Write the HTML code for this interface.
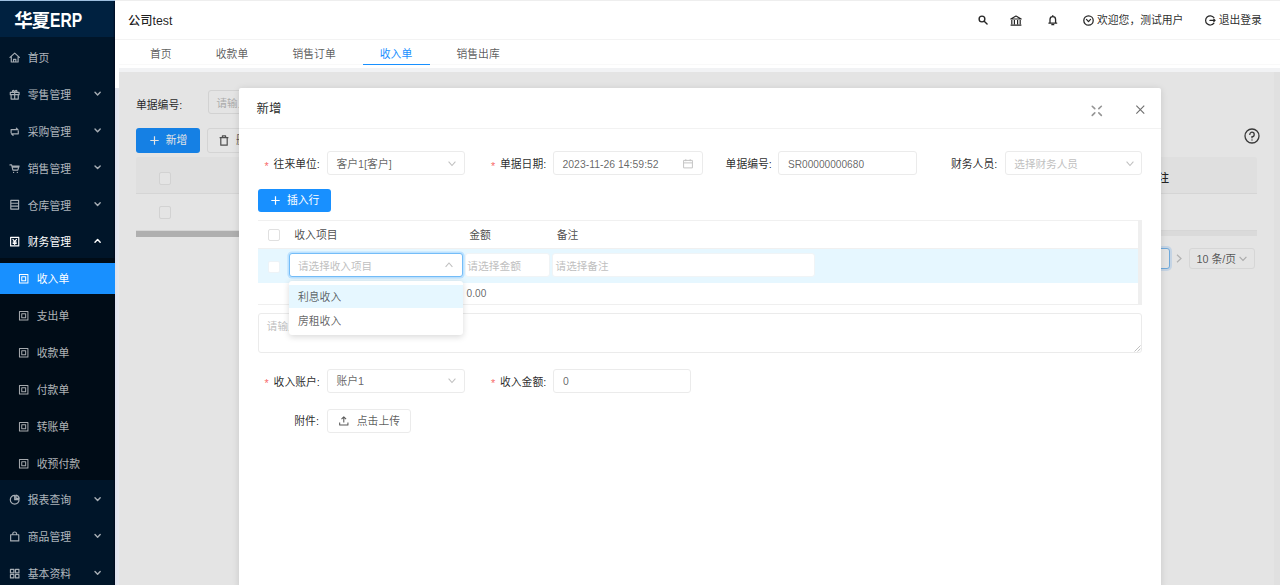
<!DOCTYPE html>
<html lang="zh-CN">
<head>
<meta charset="utf-8">
<title>华夏ERP</title>
<style>
*{box-sizing:border-box;margin:0;padding:0}
html,body{width:1280px;height:585px;overflow:hidden;background:#fff}
body{position:relative;font-family:"Liberation Sans","Noto Sans CJK SC",sans-serif;font-size:10.8px;color:rgba(0,0,0,.65);line-height:1}
.a{position:absolute;white-space:nowrap}
svg{position:absolute;display:block;overflow:visible}
/* sidebar */
#side{left:0;top:0;width:115px;height:585px;background:#001529}
#logo{left:0;top:0;width:115px;height:36.5px;background:#002140}
#logo b{left:14.2px;top:8.3px;font-size:18.5px;line-height:24px;color:#fff;font-weight:700;letter-spacing:-1px}
#logo b span{display:inline-block;font-size:20.4px;line-height:24px;letter-spacing:0;transform:scaleX(.765);transform-origin:0 50%;vertical-align:baseline;margin-left:.6px}
#topl{left:0;top:0;width:115px;height:1px;background:#9dbfe0}
#topr{left:115px;top:0;width:1165px;height:1px;background:#eee}
#sedge{left:112.5px;top:1px;width:2.5px;height:584px;background:linear-gradient(90deg,rgba(0,5,25,0),rgba(0,5,25,.75))}
#sub{left:0;top:257.5px;width:115px;height:222.3px;background:#000c17}
#sel{left:0;top:263px;width:115px;height:30.5px;background:#1890ff}
.mi{left:27.8px;color:rgba(255,255,255,.7);font-size:10.8px;line-height:14px}
.mi.s{left:36.8px}
.mi.w{color:#fff}
/* header */
#hdr{left:115px;top:0;width:1165px;height:39.2px;background:#fff;box-shadow:0 1px 3px rgba(0,21,41,.08)}
#tabs{left:115px;top:39.2px;width:1165px;height:28.4px;background:#fff;border-top:1px solid #f3f3f3}
#tabl{left:118.5px;top:63.8px;width:1161.5px;height:1px;background:#f9f9f9}
.tab{top:47px;font-size:10.8px;line-height:14px;color:rgba(0,0,0,.65)}
.ht{font-size:10.8px;line-height:14px;color:rgba(0,0,0,.85)}
/* content */
#cont{left:115px;top:67.6px;width:1165px;height:518px;background:#f1f2f4}
#card{left:118.5px;top:71.8px;width:1155px;height:514px;background:#fff}
#mask{left:118.5px;top:71.8px;width:1155px;height:514px;background:rgba(0,0,0,.105)}
#sscr{left:115px;top:40px;width:3.5px;height:545px;background:#fff}
#sthumb{left:115px;top:88px;width:3.5px;height:497px;background:linear-gradient(90deg,#dde1ee,#e6e8ee)}
#sbar{left:1273.5px;top:71.8px;width:7px;height:514px;background:#e0e0e0}
.lbl{color:rgba(0,0,0,.85);font-size:10.8px;line-height:14px}
.inp{border:1px solid #ebebeb;border-radius:3px;background:#fff;height:24px}
.ph{color:#bfbfbf;font-size:10.6px;line-height:14px}
.val{color:rgba(0,0,0,.62);font-size:10.8px;line-height:14px}
.btn{background:#1890ff;border-radius:3px;color:#fff;font-size:10.8px}
.ck{width:12.5px;height:12.5px;border:1px solid #e0e0e0;border-radius:2px;background:#fff}
.req{color:#f76a6a;font-size:10.8px;line-height:14px;font-family:"Liberation Sans",sans-serif}
/* modal */
#modal{left:239px;top:88px;width:922px;height:500px;background:#fff;border-radius:2px 2px 0 0;box-shadow:0 1px 7px rgba(0,0,0,.13)}
#mhl{left:239px;top:128.3px;width:922px;height:1px;background:#f2f2f2}
#co{left:128px;top:13.2px;font-size:12.3px;line-height:16px;color:rgba(0,0,0,.88);font-weight:500}
#mtitle{left:256.5px;top:101.3px;font-size:12.4px;line-height:16px;color:rgba(0,0,0,.85);font-weight:400}
.arr{fill:none;stroke:#bfbfbf;stroke-width:1.05}
.lat{font-size:10.4px;margin-top:.7px}
#dd{left:288.7px;top:281.3px;width:174.5px;height:54px;background:#fff;border-radius:3px;box-shadow:0 1.5px 6px rgba(0,0,0,.15)}

</style>
</head>
<body>
<div class="a" id="cont"></div>
<div class="a" id="card"></div>
<div class="a lbl" style="left:136px;top:97.7px">单据编号:</div>
<div class="a inp" style="left:207.5px;top:89.5px;width:160px;height:24px"><span class="a ph" style="left:8px;top:5.2px">请输入单据编号</span></div>
<div class="a btn" style="left:136px;top:128.3px;width:64px;height:24.5px"><span class="a" style="left:29.8px;top:5.2px;line-height:14px">新增</span></div>
<svg style="left:149.8px;top:136.3px" width="9" height="9" viewBox="0 0 9 9" fill="none" stroke="#fff" stroke-width="1.2"><path d="M4.5 0.3 V8.7 M0.3 4.5 H8.7"/></svg>
<div class="a inp" style="left:207px;top:128.3px;width:64px;height:24.5px;border-color:#ededed"><span class="a" style="left:28px;top:4.2px;line-height:14px">删除</span></div>
<svg style="left:218.8px;top:135px" width="10" height="11" viewBox="0 0 10 11" fill="none" stroke="#595959" stroke-width="1.2" stroke-linejoin="round"><path d="M0.6 2.6 H9.4 M3.4 2.4 V0.9 H6.6 V2.4 M1.8 2.8 V10.2 H8.2 V2.8"/></svg>
<div class="a" style="left:136px;top:156.8px;width:1121px;height:37.5px;background:#fafafa;border-bottom:1px solid #efefef;border-radius:3px 3px 0 0"></div>
<div class="a" style="left:136px;top:229.8px;width:1121px;height:1px;background:#f0f0f0"></div>
<div class="a ck" style="left:158.5px;top:172.2px;border-color:#ebebeb"></div>
<div class="a ck" style="left:158.5px;top:206px;border-color:#ebebeb"></div>
<div class="a" style="left:136px;top:230.5px;width:1121px;height:5px;background:#f4f4f4"></div>
<div class="a" style="left:136px;top:230.5px;width:600px;height:6px;background:#c4c4c4"></div>
<div class="a lbl" style="left:1147.5px;top:170.7px;font-weight:500">备注</div>
<svg style="left:1244.4px;top:128.1px" width="16" height="16" viewBox="0 0 16 16" fill="none" stroke="#404040" stroke-width="1.3" stroke-linecap="round"><circle cx="8" cy="8" r="7"/><path d="M5.8 6.4 A2.2 2.2 0 1 1 8 8.6 V9.8 M8 11.8 v.2"/></svg>
<div class="a" style="left:1145.5px;top:247.5px;width:24.5px;height:21px;border:1px solid #7dbdf5;border-radius:3px;background:#fff;box-shadow:0 0 0 2px rgba(24,144,255,.15)"></div>
<svg style="left:1176px;top:254px" width="6" height="9" viewBox="0 0 6 9" fill="none" stroke="#c8c8c8" stroke-width="1.2"><path d="M1 0.8 L5 4.5 L1 8.2"/></svg>
<div class="a inp" style="left:1188.5px;top:248px;width:66px;height:20.5px;border-color:#f0f0f0"><span class="a" style="left:7px;top:2.7px;line-height:14px;font-size:10.8px">10 条/页</span></div>
<svg style="left:1238.5px;top:255.5px" width="8" height="6" viewBox="0 0 8 6" fill="none" stroke="#bfbfbf" stroke-width="1.1"><path d="M0.6 0.8 L4 4.4 L7.4 0.8"/></svg>
<div class="a" id="mask"></div>
<div class="a" id="sbar"></div>
<div class="a" id="sscr"></div>
<div class="a" id="sthumb"></div>

<div class="a" id="hdr"></div>
<div class="a" id="tabs"></div>
<div class="a" id="tabl"></div>
<div class="a" id="co">公司test</div>
<svg style="left:977.7px;top:14.8px" width="10.2" height="10.2" viewBox="0 0 11 11" fill="none" stroke="#262626" stroke-width="1.5" stroke-linecap="round"><circle cx="4.3" cy="4.3" r="3.1"/><path d="M6.7 6.7 L9.8 9.8"/></svg>
<svg style="left:1010px;top:14.5px" width="12" height="12" viewBox="0 0 12 12" fill="none" stroke="#262626" stroke-width="1.2" stroke-linejoin="round"><path d="M0.8 4 L6 1 L11.2 4 Z M1.8 5 V9.2 M4.4 5 V9.2 M7.6 5 V9.2 M10.2 5 V9.2 M0.6 10.2 H11.4"/></svg>
<svg style="left:1048px;top:13.6px" width="9.6" height="12.4" viewBox="0 0 11 12.5" fill="none" stroke="#262626" stroke-width="1.5" stroke-linecap="round" stroke-linejoin="round"><path d="M5.5 1 V1.8 M2.3 9.6 V5.4 A3.2 3.2 0 0 1 8.7 5.4 V9.6 M1 9.6 H10 M4.4 11.4 H6.6"/></svg>
<svg style="left:1083.3px;top:14.6px" width="11" height="11" viewBox="0 0 14 14" fill="none" stroke="#262626" stroke-width="1.6" stroke-linecap="round" stroke-linejoin="round"><circle cx="7" cy="7" r="6"/><path d="M4.4 5.6 L7 8.4 L9.6 5.6"/></svg>
<div class="a ht" style="left:1097px;top:13.3px">欢迎您，测试用户</div>
<svg style="left:1205px;top:14.7px" width="10.8" height="10.8" viewBox="0 0 14 14" fill="none" stroke="#262626" stroke-width="1.6" stroke-linecap="round" stroke-linejoin="round"><path d="M11.6 3.4 A6 6 0 1 0 11.6 10.6 M6.4 7 H13 M11.4 5.4 L13 7 L11.4 8.6"/></svg>
<div class="a ht" style="left:1218.7px;top:13.3px">退出登录</div>
<div class="a tab" style="left:150px">首页</div>
<div class="a tab" style="left:215.8px">收款单</div>
<div class="a tab" style="left:292.5px">销售订单</div>
<div class="a tab" style="left:379.8px;color:#1890ff">收入单</div>
<div class="a" style="left:363px;top:63.5px;width:67px;height:1.5px;background:#1890ff"></div>
<div class="a tab" style="left:456.5px">销售出库</div>

<div class="a" id="side"></div>
<div class="a" id="logo"><b class="a">华夏<span>ERP</span></b></div>
<div class="a" id="sub"></div>
<div class="a" id="sedge"></div>
<div class="a" id="sel"></div>
<div class="a" id="topl"></div>
<div class="a" id="topr"></div>
<svg style="left:9.0px;top:51.9px" width="11.4" height="11.4" viewBox="0 0 14 14" fill="none" stroke="rgba(255,255,255,.65)" stroke-width="1.45" stroke-linecap="round" stroke-linejoin="round"><path d="M1.2 6.6 L7 1.4 L12.8 6.6 M2.8 5.6 V12.3 H11.2 V5.6 M5.6 12.3 V9 H8.4 V12.3"/></svg>
<div class="a mi" style="top:51.0px">首页</div>
<svg style="left:9.0px;top:88.8px" width="11.4" height="11.4" viewBox="0 0 14 14" fill="none" stroke="rgba(255,255,255,.65)" stroke-width="1.45" stroke-linecap="round" stroke-linejoin="round"><path d="M1.6 4.2 H12.4 V7 H1.6 Z M2.6 7 V12.4 H11.4 V7 M7 4.2 V12.4 M7 4.2 C5 4.2 4 3.4 4.3 2.4 C4.8 1.2 6.6 1.8 7 4.2 C7.4 1.8 9.2 1.2 9.7 2.4 C10 3.4 9 4.2 7 4.2"/></svg>
<div class="a mi" style="top:87.9px">零售管理</div>
<svg style="left:0;top:0" width="115" height="585" fill="none" stroke="rgba(255,255,255,.65)" stroke-width="1.4" stroke-linecap="round" stroke-linejoin="round"><path d="M95.0 92.2 l2.6 2.7 l2.6 -2.7"/></svg>
<svg style="left:9.0px;top:125.6px" width="11.4" height="11.4" viewBox="0 0 14 14" fill="none" stroke="rgba(255,255,255,.65)" stroke-width="1.45" stroke-linecap="round" stroke-linejoin="round"><path d="M2.6 8.2 V4.4 H10.6 M9 2.6 L11 4.4 M11.4 5.8 V9.6 H3.4 M5 11.4 L3 9.6"/></svg>
<div class="a mi" style="top:124.7px">采购管理</div>
<svg style="left:0;top:0" width="115" height="585" fill="none" stroke="rgba(255,255,255,.65)" stroke-width="1.4" stroke-linecap="round" stroke-linejoin="round"><path d="M95.0 129.0 l2.6 2.7 l2.6 -2.7"/></svg>
<svg style="left:9.0px;top:162.5px" width="11.4" height="11.4" viewBox="0 0 14 14" fill="none" stroke="rgba(255,255,255,.65)" stroke-width="1.45" stroke-linecap="round" stroke-linejoin="round"><path d="M1.2 2.4 H3.2 L4.8 8.8 H10.8 L12.4 3.8 H3.6 M4.2 5.2 H11.8 M5.6 11.6 h.1 M10.2 11.6 h.1"/></svg>
<div class="a mi" style="top:161.6px">销售管理</div>
<svg style="left:0;top:0" width="115" height="585" fill="none" stroke="rgba(255,255,255,.65)" stroke-width="1.4" stroke-linecap="round" stroke-linejoin="round"><path d="M95.0 165.9 l2.6 2.7 l2.6 -2.7"/></svg>
<svg style="left:9.0px;top:199.4px" width="11.4" height="11.4" viewBox="0 0 14 14" fill="none" stroke="rgba(255,255,255,.65)" stroke-width="1.45" stroke-linecap="round" stroke-linejoin="round"><path d="M2.2 1.6 H11.8 V12.4 H2.2 Z M2.2 5.2 H11.8 M2.2 8.8 H11.8"/></svg>
<div class="a mi" style="top:198.5px">仓库管理</div>
<svg style="left:0;top:0" width="115" height="585" fill="none" stroke="rgba(255,255,255,.65)" stroke-width="1.4" stroke-linecap="round" stroke-linejoin="round"><path d="M95.0 202.8 l2.6 2.7 l2.6 -2.7"/></svg>
<svg style="left:9.0px;top:236.2px" width="11.4" height="11.4" viewBox="0 0 14 14" fill="none" stroke="#fff" stroke-width="1.45" stroke-linecap="round" stroke-linejoin="round"><path d="M2 1.8 H12 V12.2 H2 Z M4.8 4.2 L7 6.8 L9.2 4.2 M7 6.8 V10.4 M5 7.4 H9 M5 9 H9"/></svg>
<div class="a mi w" style="top:235.3px">财务管理</div>
<svg style="left:0;top:0" width="115" height="585" fill="none" stroke="#fff" stroke-width="1.4" stroke-linecap="round" stroke-linejoin="round"><path d="M95.0 242.2 l2.6 -2.7 l2.6 2.7"/></svg>
<svg style="left:18.0px;top:273.1px" width="11.4" height="11.4" viewBox="0 0 14 14" fill="none" stroke="#fff" stroke-width="1.25" stroke-linecap="round" stroke-linejoin="round"><path d="M1.8 1.8 H12.2 V12.2 H1.8 Z M4.6 4.6 H9.4 V9.4 H4.6 Z"/></svg>
<div class="a mi s w" style="top:272.2px">收入单</div>
<svg style="left:18.0px;top:310.0px" width="11.4" height="11.4" viewBox="0 0 14 14" fill="none" stroke="rgba(255,255,255,.65)" stroke-width="1.25" stroke-linecap="round" stroke-linejoin="round"><path d="M1.8 1.8 H12.2 V12.2 H1.8 Z M4.6 4.6 H9.4 V9.4 H4.6 Z"/></svg>
<div class="a mi s" style="top:309.1px">支出单</div>
<svg style="left:18.0px;top:346.9px" width="11.4" height="11.4" viewBox="0 0 14 14" fill="none" stroke="rgba(255,255,255,.65)" stroke-width="1.25" stroke-linecap="round" stroke-linejoin="round"><path d="M1.8 1.8 H12.2 V12.2 H1.8 Z M4.6 4.6 H9.4 V9.4 H4.6 Z"/></svg>
<div class="a mi s" style="top:346.0px">收款单</div>
<svg style="left:18.0px;top:383.7px" width="11.4" height="11.4" viewBox="0 0 14 14" fill="none" stroke="rgba(255,255,255,.65)" stroke-width="1.25" stroke-linecap="round" stroke-linejoin="round"><path d="M1.8 1.8 H12.2 V12.2 H1.8 Z M4.6 4.6 H9.4 V9.4 H4.6 Z"/></svg>
<div class="a mi s" style="top:382.8px">付款单</div>
<svg style="left:18.0px;top:420.6px" width="11.4" height="11.4" viewBox="0 0 14 14" fill="none" stroke="rgba(255,255,255,.65)" stroke-width="1.25" stroke-linecap="round" stroke-linejoin="round"><path d="M1.8 1.8 H12.2 V12.2 H1.8 Z M4.6 4.6 H9.4 V9.4 H4.6 Z"/></svg>
<div class="a mi s" style="top:419.7px">转账单</div>
<svg style="left:18.0px;top:457.5px" width="11.4" height="11.4" viewBox="0 0 14 14" fill="none" stroke="rgba(255,255,255,.65)" stroke-width="1.25" stroke-linecap="round" stroke-linejoin="round"><path d="M1.8 1.8 H12.2 V12.2 H1.8 Z M4.6 4.6 H9.4 V9.4 H4.6 Z"/></svg>
<div class="a mi s" style="top:456.6px">收预付款</div>
<svg style="left:9.0px;top:494.3px" width="11.4" height="11.4" viewBox="0 0 14 14" fill="none" stroke="rgba(255,255,255,.65)" stroke-width="1.45" stroke-linecap="round" stroke-linejoin="round"><path d="M7 1.6 A5.4 5.4 0 1 0 12.4 7 H7 Z M8.6 1.4 A5 5 0 0 1 12.6 5.4 H8.6 Z"/></svg>
<div class="a mi" style="top:493.4px">报表查询</div>
<svg style="left:0;top:0" width="115" height="585" fill="none" stroke="rgba(255,255,255,.65)" stroke-width="1.4" stroke-linecap="round" stroke-linejoin="round"><path d="M95.0 497.7 l2.6 2.7 l2.6 -2.7"/></svg>
<svg style="left:9.0px;top:531.2px" width="11.4" height="11.4" viewBox="0 0 14 14" fill="none" stroke="rgba(255,255,255,.65)" stroke-width="1.45" stroke-linecap="round" stroke-linejoin="round"><path d="M2 4.6 H12 V12.2 H2 Z M4.6 4.6 V3.6 A2.4 2.4 0 0 1 9.4 3.6 V4.6"/></svg>
<div class="a mi" style="top:530.3px">商品管理</div>
<svg style="left:0;top:0" width="115" height="585" fill="none" stroke="rgba(255,255,255,.65)" stroke-width="1.4" stroke-linecap="round" stroke-linejoin="round"><path d="M95.0 534.6 l2.6 2.7 l2.6 -2.7"/></svg>
<svg style="left:9.0px;top:568.1px" width="11.4" height="11.4" viewBox="0 0 14 14" fill="none" stroke="rgba(255,255,255,.65)" stroke-width="1.45" stroke-linecap="round" stroke-linejoin="round"><path d="M1.8 1.8 H6 V6 H1.8 Z M8 1.8 H12.2 V6 H8 Z M1.8 8 H6 V12.2 H1.8 Z M8 8 H12.2 V12.2 H8 Z"/></svg>
<div class="a mi" style="top:567.2px">基本资料</div>
<svg style="left:0;top:0" width="115" height="585" fill="none" stroke="rgba(255,255,255,.65)" stroke-width="1.4" stroke-linecap="round" stroke-linejoin="round"><path d="M95.0 571.5 l2.6 2.7 l2.6 -2.7"/></svg>
<div class="a" id="modal"></div>
<div class="a" id="mhl"></div>
<div class="a" id="mtitle">新增</div>
<svg style="left:1090.8px;top:104.6px" width="11.6" height="11.6" viewBox="0 0 12 12" fill="none" stroke="#959595" stroke-width="1.7" stroke-linecap="round"><path d="M1.3 1.3 L3.9 3.8 M10.7 1.3 L8.1 3.8 M1.3 10.7 L3.9 8.2 M10.7 10.7 L8.1 8.2"/></svg>
<svg style="left:1135.7px;top:104.6px" width="8.6" height="9.2" viewBox="0 0 10 10" fill="none" stroke="#6e6e6e" stroke-width="1.3"><path d="M0.4 0.4 L9.6 9.6 M9.6 0.4 L0.4 9.6"/></svg>

<!-- row 1 -->
<div class="a req" style="left:264.5px;top:158.6px">*</div>
<div class="a lbl" style="left:273.6px;top:156.9px">往来单位:</div>
<div class="a inp" style="left:327px;top:151px;width:137.5px"><span class="a val" style="left:8.5px;top:4.9px">客户1[客户]</span></div>
<svg class="arr" style="left:447.5px;top:160.7px" width="8" height="5.5" viewBox="0 0 8 5.5"><path d="M0.6 0.7 L4 4.5 L7.4 0.7"/></svg>
<div class="a req" style="left:491px;top:158.6px">*</div>
<div class="a lbl" style="left:500px;top:156.9px">单据日期:</div>
<div class="a inp" style="left:552.5px;top:151px;width:150px"><span class="a val lat" style="left:9px;top:4.9px;font-size:10.45px">2023-11-26 14:59:52</span></div>
<svg style="left:682.5px;top:158.7px" width="10" height="9.5" viewBox="0 0 10 9.5" fill="none" stroke="#c4c4c4" stroke-width="1"><path d="M0.6 1.4 H9.4 V8.9 H0.6 Z M0.6 3.9 H9.4 M2.8 0.2 V2.2 M7.2 0.2 V2.2"/></svg>
<div class="a lbl" style="left:725.6px;top:156.9px">单据编号:</div>
<div class="a inp" style="left:778px;top:151px;width:139px"><span class="a val lat" style="left:9px;top:4.9px;font-size:10.15px">SR00000000680</span></div>
<div class="a lbl" style="left:951px;top:156.9px">财务人员:</div>
<div class="a inp" style="left:1004.8px;top:151px;width:137.5px"><span class="a ph" style="left:8.5px;top:4.9px">选择财务人员</span></div>
<svg class="arr" style="left:1125.5px;top:160.7px" width="8" height="5.5" viewBox="0 0 8 5.5"><path d="M0.6 0.7 L4 4.5 L7.4 0.7"/></svg>

<!-- insert-row button -->
<div class="a btn" style="left:257.5px;top:188.7px;width:73.5px;height:23.5px"><span class="a" style="left:29.5px;top:4.8px;line-height:14px">插入行</span></div>
<svg style="left:270.7px;top:196px" width="9" height="9" viewBox="0 0 9 9" fill="none" stroke="#fff" stroke-width="1.2"><path d="M4.5 0.3 V8.7 M0.3 4.5 H8.7"/></svg>

<!-- editable table -->
<div class="a" style="left:257.5px;top:219.5px;width:880px;height:29.5px;background:#fff;border-top:1px solid #f0f0f0;border-bottom:1px solid #f0f0f0"></div>
<div class="a" style="left:1137.5px;top:219.5px;width:4.5px;height:85.5px;background:#efefef"></div>
<div class="a ck" style="left:267.7px;top:228.5px"></div>
<div class="a lbl" style="left:294.3px;top:228.4px;color:rgba(0,0,0,.72)">收入项目</div>
<div class="a lbl" style="left:469.3px;top:228.4px;color:rgba(0,0,0,.72)">金额</div>
<div class="a lbl" style="left:556.8px;top:228.4px;color:rgba(0,0,0,.72)">备注</div>
<div class="a" style="left:257.5px;top:248.7px;width:880px;height:34px;background:#e6f7ff"></div>
<div class="a ck" style="left:267.7px;top:260.8px;border-color:#edf3f7"></div>
<div class="a inp" style="left:288.7px;top:253px;width:174.5px;border-color:#74bdf8;box-shadow:0 0 0 1.6px rgba(24,144,255,.2)"><span class="a ph" style="left:8.3px;top:5.1px">请选择收入项目</span></div>
<svg class="arr" style="left:445.2px;top:262.2px" width="8" height="5.5" viewBox="0 0 8 5.5"><path d="M0.6 4.8 L4 1 L7.4 4.8"/></svg>
<div class="a inp" style="left:464.8px;top:253px;width:85.5px;border-color:#f0f4f6"><span class="a ph" style="left:1.4px;top:5.1px;font-size:10.75px">请选择金额</span></div>
<div class="a inp" style="left:551.8px;top:253px;width:263px;border-color:#f0f4f6"><span class="a ph" style="left:2.8px;top:5.1px">请选择备注</span></div>
<div class="a" style="left:257.5px;top:304px;width:880px;height:1px;background:#efefef"></div>
<div class="a val lat" style="left:466.6px;top:286.8px;font-size:10.1px">0.00</div>

<!-- remark textarea -->
<div class="a inp" style="left:257.5px;top:313px;width:884.5px;height:39.8px"><span class="a ph" style="left:8.3px;top:4.6px">请输入备注</span></div>
<svg style="left:1133.5px;top:344.5px" width="7" height="7" viewBox="0 0 7 7" fill="none" stroke="#b0b0b0" stroke-width=".8"><path d="M0.5 6.5 L6.5 0.5 M3.6 6.5 L6.5 3.6"/></svg>

<!-- dropdown -->
<div class="a" id="dd"></div>
<div class="a" style="left:288.7px;top:284.5px;width:174.5px;height:23px;background:#e6f7ff"></div>
<div class="a val" style="left:298px;top:290.0px">利息收入</div>
<div class="a val" style="left:298px;top:314.2px">房租收入</div>

<!-- row 2 -->
<div class="a req" style="left:264.5px;top:376.3px">*</div>
<div class="a lbl" style="left:273.6px;top:374.5px">收入账户:</div>
<div class="a inp" style="left:327px;top:368.6px;width:137.5px"><span class="a val" style="left:8.5px;top:4.9px">账户1</span></div>
<svg class="arr" style="left:447.5px;top:378.3px" width="8" height="5.5" viewBox="0 0 8 5.5"><path d="M0.6 0.7 L4 4.5 L7.4 0.7"/></svg>
<div class="a req" style="left:491px;top:376.3px">*</div>
<div class="a lbl" style="left:500px;top:374.5px">收入金额:</div>
<div class="a inp" style="left:552.5px;top:368.6px;width:138.5px"><span class="a val lat" style="left:9.5px;top:4.9px">0</span></div>

<!-- attachment -->
<div class="a lbl" style="left:294.3px;top:414.3px">附件:</div>
<div class="a inp" style="left:327px;top:408.8px;width:84px"><span class="a" style="left:28.8px;top:4.4px;line-height:14px;color:rgba(0,0,0,.65)">点击上传</span></div>
<svg style="left:339.3px;top:415.8px" width="9.6" height="10" viewBox="0 0 10 10" fill="none" stroke="#595959" stroke-width="1.1" stroke-linejoin="round"><path d="M5 6.6 V0.8 M2.6 3 L5 0.7 L7.4 3 M0.7 6.6 V9.2 H9.3 V6.6"/></svg>

</body>
</html>
